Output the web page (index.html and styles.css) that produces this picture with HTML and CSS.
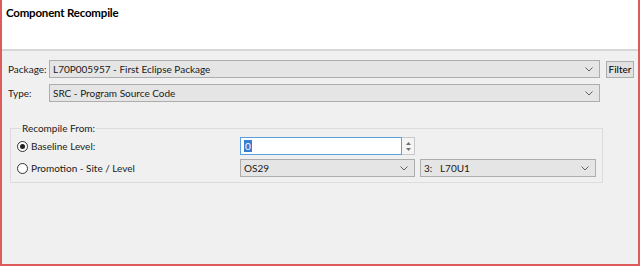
FILE: index.html
```html
<!DOCTYPE html>
<html>
<head>
<meta charset="utf-8">
<link rel="stylesheet" href="styles.css">
</head>
<body>
<div class="window">
  <div class="header">
    <div class="title">Component Recompile</div>
  </div>
  <div class="content">
    <div class="row">
      <span class="label">Package:</span>
      <div class="combo wide"><span>L70P005957 - First Eclipse Package</span><svg class="chev" width="8" height="5" viewBox="0 0 8 5"><path d="M0.5 0.5 L4 4 L7.5 0.5" fill="none" stroke="#606060" stroke-width="1"/></svg></div>
      <button class="btn">Filter</button>
    </div>
    <div class="row">
      <span class="label">Type:</span>
      <div class="combo wide"><span>SRC - Program Source Code</span><svg class="chev" width="8" height="5" viewBox="0 0 8 5"><path d="M0.5 0.5 L4 4 L7.5 0.5" fill="none" stroke="#606060" stroke-width="1"/></svg></div>
    </div>
    <fieldset class="group">
      <legend>Recompile From:</legend>
      <div class="grow">
        <label class="radio"><span class="dot checked"></span>Baseline Level:</label>
        <div class="spin">
          <div class="spin-input"><span class="sel">0</span></div>
          <div class="spin-btns">
            <svg width="5" height="3" viewBox="0 0 5 3"><path d="M0 3 L2.5 0 L5 3Z" fill="#707070"/></svg>
            <svg width="5" height="3" viewBox="0 0 5 3"><path d="M0 0 L2.5 3 L5 0Z" fill="#707070"/></svg>
          </div>
        </div>
      </div>
      <div class="grow">
        <label class="radio"><span class="dot"></span>Promotion - Site / Level</label>
        <div class="combo site"><span>OS29</span><svg class="chev" width="8" height="5" viewBox="0 0 8 5"><path d="M0.5 0.5 L4 4 L7.5 0.5" fill="none" stroke="#606060" stroke-width="1"/></svg></div>
        <div class="combo level"><span>3:&nbsp;&nbsp;&nbsp;L70U1</span><svg class="chev" width="8" height="5" viewBox="0 0 8 5"><path d="M0.5 0.5 L4 4 L7.5 0.5" fill="none" stroke="#606060" stroke-width="1"/></svg></div>
      </div>
    </fieldset>
  </div>
</div>
</body>
</html>
```
FILE: styles.css
```css
* { box-sizing: border-box; }
html, body { margin: 0; padding: 0; }
body {
  font-family: Lato, "Noto Sans", sans-serif;
  font-size: 10px;
  color: #1a1a1a;
  background: #f0f0f0;
}
.window {
  width: 640px;
  height: 266px;
  border-left: 2px solid #dd5b5b;
  border-right: 2px solid #dd5b5b;
  border-bottom: 2px solid #dd5b5b;
  background: #f0f0f0;
  display: flex;
  flex-direction: column;
}
.header {
  height: 51px;
  background: #ffffff;
  border-bottom: 2px solid #d6d6d6;
  padding: 6px 0 0 4px;
}
.title {
  font-weight: bold;
  font-size: 11.5px;
  letter-spacing: -0.2px;
  color: #000;
}
.content {
  padding: 9px 0 0 6px;
  display: flex;
  flex-direction: column;
  gap: 6px;
}
.row {
  display: flex;
  align-items: center;
  height: 18px;
}
.label {
  width: 41px;
}
.combo {
  height: 18px;
  background: #e5e5e5;
  border: 1px solid #adadad;
  display: flex;
  align-items: center;
  justify-content: space-between;
  padding: 0 6px 0 3px;
}
.chev { flex: none; }
.wide { width: 551px; }
.btn {
  margin-left: 6px;
  width: 28px;
  height: 17px;
  background: #e1e1e1;
  border: 1px solid #adadad;
  font: inherit;
  color: #000;
  padding: 0;
}
.group {
  margin: 15px 0 0 2px;
  width: 593px;
  height: 60px;
  border: 1px solid #dcdcdc;
  padding: 4px 6px 0 6px;
  display: flex;
  flex-direction: column;
  gap: 4px;
}
.group legend {
  padding: 0 1px;
  margin-left: 4px;
  line-height: 10px;
}
.grow {
  display: flex;
  align-items: center;
  height: 18px;
}
.radio {
  width: 223px;
  display: flex;
  align-items: center;
  gap: 3px;
}
.dot {
  width: 11px;
  height: 11px;
  border: 1px solid #333;
  border-radius: 50%;
  background: #fff;
  position: relative;
}
.dot.checked::after {
  content: "";
  position: absolute;
  left: 2px; top: 2px;
  width: 5px; height: 5px;
  border-radius: 50%;
  background: #222;
}
.spin {
  display: flex;
  width: 175px;
  height: 18px;
}
.spin-input {
  width: 162px;
  height: 18px;
  background: #fff;
  border: 1px solid #5a9fe0;
  display: flex;
  align-items: center;
  padding-left: 3px;
}
.sel {
  background: #3a7bd5;
  color: #fff;
  padding: 0 1px;
  line-height: 12px;
}
.spin-btns {
  width: 13px;
  height: 18px;
  border: 1px solid #c8c8c8;
  border-left: none;
  background: #f4f4f4;
  display: flex;
  flex-direction: column;
  align-items: center;
  justify-content: space-around;
  padding: 2px 0;
}
.site { width: 175px; }
.level { width: 176px; margin-left: 5px; }
```
